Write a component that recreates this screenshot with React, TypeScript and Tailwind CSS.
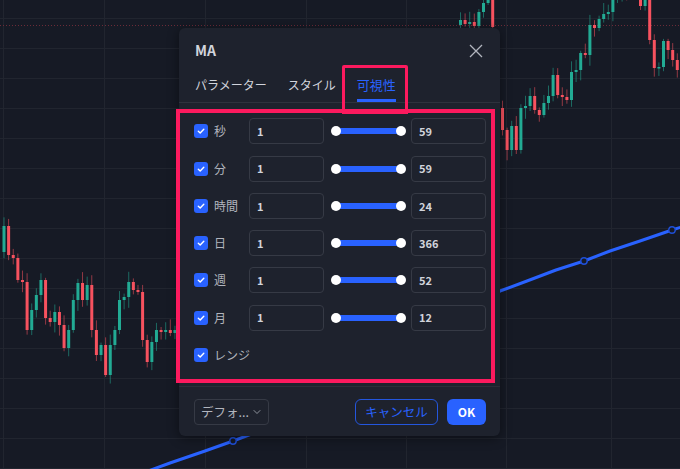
import { ChevronDown } from 'lucide-react';

const UP = '#22ab94';
const DOWN = '#f7525f';

type Candle = { x: number; o: number; c: number; h: number; l: number };

const noise = (i: number) => {
  const s = Math.sin(i * 12.9898 + 78.233) * 43758.5453;
  return s - Math.floor(s);
};

const fromCloses = (x0: number, step: number, open0: number, closes: number[], seed: number): Candle[] => {
  let o = open0;
  return closes.map((c, i) => {
    const top = Math.min(o, c);
    const bot = Math.max(o, c);
    const candle = { x: x0 + i * step, o, c, h: top - 2 - noise(seed + i) * 9, l: bot + 2 + noise(seed + i + 50) * 9 };
    o = c;
    return candle;
  });
};

// left cluster, lower half of chart
const leftCandles = fromCloses(2.5, 4.62, 252, [
  226, 255, 258, 280, 282, 330, 310, 295, 280, 318, 322, 312, 325, 348, 330, 300, 283, 300, 285, 330,
  355, 345, 375, 345, 330, 300, 297, 282, 290, 292, 340, 362, 342, 330, 332, 330, 333, 330,
], 1);

// right cluster, upper right
const rightCandles = fromCloses(501, 4.6, 108, [
  130, 150, 126, 150, 108, 106, 96, 110, 115, 103, 96, 75, 95, 97, 100, 72, 70, 53, 55, 25,
  28, 19, 14, 12, 0, -8, -15, -10, -20, -12, 6, 0, 40, 68, 67, 41, 50, 60, 70, 97,
], 100);

const midCandles = fromCloses(459, 4.6, 25, [20, 24, 22, 26, 12, 3, -4, 27], 200);

const gridY = Array.from({ length: 16 }, (_, i) => 18 + i * 30);
const gridX = [3, 104, 205, 306, 406, 506, 611];

const maLine: [number, number][] = [
  [140, 474], [170, 463], [205, 451], [233, 441], [300, 416], [400, 366], [500, 291], [527, 281],
  [556, 270], [584, 261], [610, 251], [640, 241], [672, 230], [685, 226],
];

function Chart() {
  const all = [...leftCandles, ...midCandles, ...rightCandles];
  return (
    <svg className="absolute inset-0" width="680" height="469" viewBox="0 0 680 469">
      {gridY.map((y) => (
        <line key={'h' + y} x1="0" x2="680" y1={y + 0.5} y2={y + 0.5} stroke="#21252f" />
      ))}
      {gridX.map((x) => (
        <line key={'v' + x} x1={x + 0.5} x2={x + 0.5} y1="0" y2="469" stroke="#21252f" />
      ))}
      <line x1="0" x2="680" y1="25.5" y2="25.5" stroke="#6b2b38" strokeDasharray="1 2" />
      {all.map((k, i) => {
        const col = k.c <= k.o ? UP : DOWN;
        const top = Math.min(k.o, k.c);
        const h = Math.max(Math.abs(k.c - k.o), 1.5);
        return (
          <g key={i}>
            <line x1={k.x + 1.5} x2={k.x + 1.5} y1={k.h} y2={k.l} stroke={col} strokeOpacity="0.55" />
            <rect x={k.x} y={top} width="3" height={h} fill={col} />
          </g>
        );
      })}
      <polyline
        points={maLine.map((p) => p.join(',')).join(' ')}
        fill="none"
        stroke="#2962ff"
        strokeWidth="3"
        strokeLinejoin="round"
      />
      {[[233, 441], [584, 261], [672, 230]].map(([x, y]) => (
        <circle key={x} cx={x} cy={y} r="3.2" fill="#161a25" stroke="#1f4fd6" strokeWidth="1.4" />
      ))}
    </svg>
  );
}

function Check() {
  return (
    <span className="flex h-[14px] w-[14px] shrink-0 items-center justify-center rounded-[3px] bg-[#2962ff]">
      <svg width="10" height="10" viewBox="0 0 10 10">
        <path d="M2.3 5.2 4.2 7 7.8 3.2" fill="none" stroke="white" strokeWidth="1.4" strokeLinecap="round" strokeLinejoin="round" />
      </svg>
    </span>
  );
}

function Box({ value }: { value: string }) {
  return (
    <div className="flex h-[26px] w-[75px] items-center rounded-[4px] border border-[#363a45] pl-[7px] text-[11px] font-semibold text-[#d1d4dc]">
      {value}
    </div>
  );
}

function Range() {
  return (
    <div className="flex w-[87px] items-center pl-[7px] pr-[5px]">
      <div className="relative h-[10px] w-full">
        <div className="absolute left-[5px] right-[5px] top-[2px] h-[6px] bg-[#2962ff]" />
        <span className="absolute left-0 top-0 h-[10px] w-[10px] rounded-full bg-white" />
        <span className="absolute right-0 top-0 h-[10px] w-[10px] rounded-full bg-white" />
      </div>
    </div>
  );
}

const rows = [
  { label: '秒', min: '1', max: '59' },
  { label: '分', min: '1', max: '59' },
  { label: '時間', min: '1', max: '24' },
  { label: '日', min: '1', max: '366' },
  { label: '週', min: '1', max: '52' },
  { label: '月', min: '1', max: '12' },
];

export default function App() {
  return (
    <div className="relative h-[469px] w-[680px] overflow-hidden bg-[#161a25] font-['Noto_Sans_CJK_JP','Noto_Sans',sans-serif]">
      <Chart />

      <div className="absolute left-[179px] top-[28px] flex h-[408px] w-[321px] flex-col rounded-[6px] bg-[#1e222d] shadow-[0_2px_12px_rgba(0,0,0,0.45)]">
        <div className="flex h-[46px] items-center justify-between pl-4 pr-[17px]">
          <span className="text-[14px] font-bold text-[#d1d4dc]">MA</span>
          <svg width="14" height="14" viewBox="0 0 14 14">
            <path d="M1 1 13 13M13 1 1 13" stroke="#b2b5be" strokeWidth="1.3" />
          </svg>
        </div>

        <div className="flex gap-[21px] border-b border-[#2e323d] px-4 text-[12px] leading-[18px]">
          <span className="border-b-[3px] border-transparent pb-[5px] pt-[3px] text-[#d1d4dc]">パラメーター</span>
          <span className="border-b-[3px] border-transparent pb-[5px] pt-[3px] text-[#d1d4dc]">スタイル</span>
          <span className="border-b-[3px] border-[#2962ff] pb-[5px] pt-[3px] text-[13px] text-[#2962ff]">可視性</span>
        </div>

        <div className="flex flex-col gap-[11.3px] pb-[18px] pt-[15px]">
          {rows.map((r) => (
            <div key={r.label} className="flex h-[26px] items-center pl-[15px]">
              <div className="flex w-[55px] items-center gap-[6px] text-[12px] text-[#b2b5be]">
                <Check />
                {r.label}
              </div>
              <Box value={r.min} />
              <Range />
              <Box value={r.max} />
            </div>
          ))}
          <div className="flex h-[26px] items-center gap-[6px] pl-[15px] text-[12px] text-[#b2b5be]">
            <Check />
            レンジ
          </div>
        </div>

        <div className="flex items-center border-t border-[#2a2e39] pb-[11px] pl-[15px] pr-[14px] pt-[12px]">
          <div className="flex h-[26px] w-[75px] items-center justify-between rounded-[4px] border border-[#363a45] pl-[6px] pr-[5px] text-[12.5px] text-[#b2b5be]">
            <span>デフォ...</span>
            <ChevronDown size={12} strokeWidth={1.5} />
          </div>
          <div className="ml-auto flex h-[26px] w-[83px] items-center justify-center rounded-[6px] border border-[#2456de] text-[12.5px] text-[#2962ff]">
            キャンセル
          </div>
          <div className="ml-[9px] flex h-[26px] w-[39px] items-center justify-center rounded-[6px] bg-[#2962ff] text-[12px] font-bold text-white">
            OK
          </div>
        </div>
      </div>

      {/* highlight overlays */}
      <div className="absolute left-[176px] top-[109px] h-[274px] w-[319px] border-[4px] border-[#fc1a5e]" />
      <div className="absolute left-[342px] top-[65px] h-[49px] w-[66px] rounded-t-[2px] border-[3.5px] border-[#fc1a5e]" />
    </div>
  );
}
